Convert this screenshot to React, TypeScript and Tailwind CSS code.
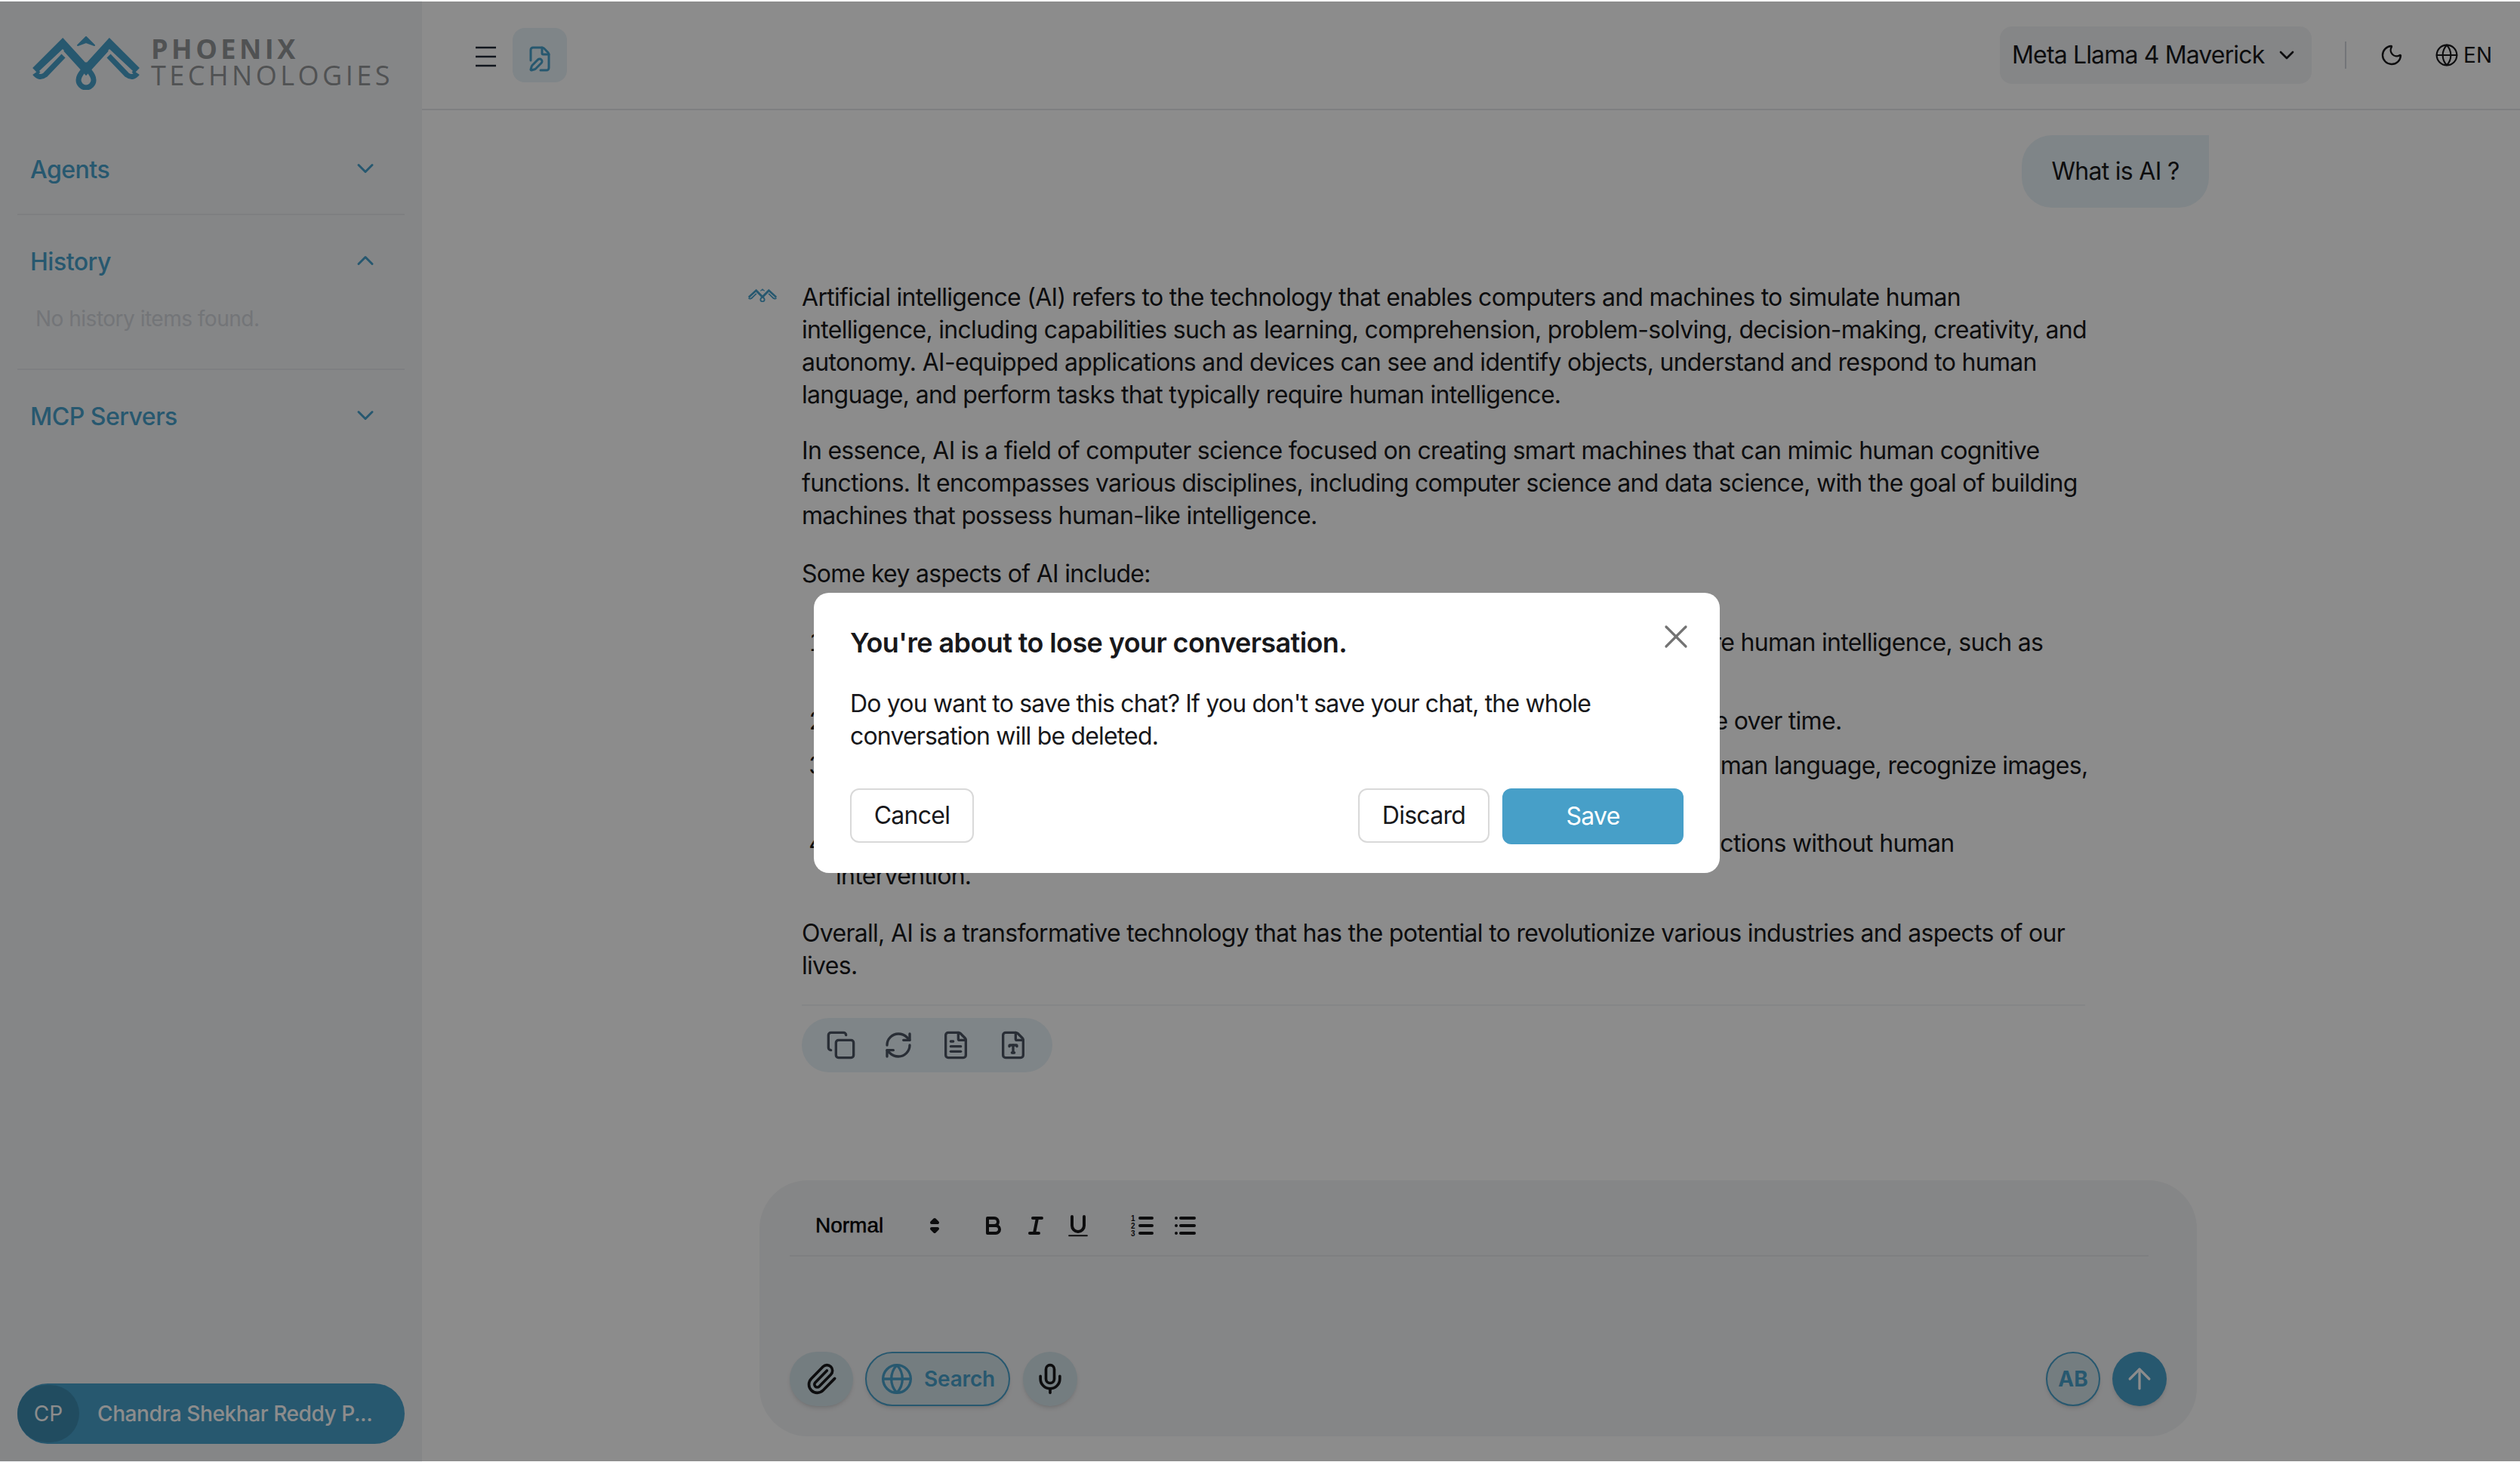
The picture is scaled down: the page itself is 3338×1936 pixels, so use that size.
import React from 'react';
import {
  ArrowUp,
  ChevronDown,
  ChevronUp,
  Copy,
  FilePen,
  FileText,
  FileType,
  Globe,
  Mic,
  Moon,
  Paperclip,
  RefreshCw,
  X,
} from 'lucide-react';

const Logo: React.FC<{ className: string; slit: string }> = ({ className, slit }) => (
  <svg viewBox="0 0 148 72" preserveAspectRatio="none" className={className} fill="none">
    <path d="M7 47 L43 11 L74 45 L105 11 L141 47" stroke="#47a0cb" strokeWidth="11" />
    <path d="M6 50 Q12 58 20 52 L44 27 M142 50 Q136 58 128 52 L104 27" stroke="#47a0cb" strokeWidth="7" />
    <path d="M13 48 L44 19 M135 48 L104 19" stroke={slit} strokeWidth="3" />
    <path d="M74 2 L85 13 L74 9 L63 13 Z" fill="#47a0cb" stroke="#47a0cb" strokeWidth="2" strokeLinejoin="round" />
    <path d="M74 41 C80 50 84 53 84 59 A10 10 0 0 1 64 59 C64 53 68 50 74 41 Z" stroke="#47a0cb" strokeWidth="7" />
  </svg>
);

const SideSection: React.FC<{ title: string; open?: boolean; last?: boolean; children?: React.ReactNode }> = ({ title, open, last, children }) => (
  <div className={last ? 'mx-[23px]' : 'mx-[23px] border-b-2 border-gray-200'}>
    <div className="flex h-[120px] items-center justify-between pl-[17px] pr-[34px] pt-[3px]">
      <span className="text-[32px] font-medium tracking-[-0.5px] text-[#47a0cb]">{title}</span>
      {open ? <ChevronUp size={36} className="mb-[4px] text-[#47a0cb]" /> : <ChevronDown size={36} className="mb-[4px] text-[#47a0cb]" />}
    </div>
    {children}
  </div>
);

const Sidebar = () => (
  <aside className="flex w-[559px] shrink-0 flex-col bg-[#f3f4f6]">
    <div className="flex h-[163px] items-start gap-[12px] pl-[40px] pt-[47px]">
      <Logo className="h-[72px] w-[148px]" slit="#f3f4f6" />
      <div className="font-['Open_Sans'] text-[36px] leading-[36px] text-[#939598]">
        <div className="font-bold tracking-[4.5px]">PHOENIX</div>
        <div className="-mt-[1px] tracking-[4.5px]">TECHNOLOGIES</div>
      </div>
    </div>
    <SideSection title="Agents" />
    <SideSection title="History" open>
      <p className="h-[83px] pl-[24px] pt-[3px] text-[28px] leading-[28px] tracking-[-0.5px] text-[#d1d5db]">No history items found.</p>
    </SideSection>
    <SideSection title="MCP Servers" last />
    <div className="mx-[23px] mb-[24px] mt-auto flex h-[80px] items-center rounded-full bg-[#47a0cb]">
      <div className="flex h-[76px] w-[82px] items-center justify-center rounded-full bg-[#3d8bb0] text-[28px] text-white">CP</div>
      <span className="ml-[24px] whitespace-nowrap text-[28px] font-medium tracking-[-0.4px] text-white">Chandra Shekhar Reddy P...</span>
    </div>
  </aside>
);

const Header = () => (
  <header className="flex h-[146px] shrink-0 items-center border-b-2 border-gray-200 pl-[71px] pr-[37px] pt-[2px]">
    <svg width="27" height="28" viewBox="0 0 27 28" stroke="#1f2937" strokeWidth="2.6" className="mt-[4px]">
      <path d="M0 2H27M0 14H27M0 26H27" />
    </svg>
    <div className="ml-[22px] flex h-[72px] w-[72px] items-center justify-center rounded-[16px] bg-[#e8f2f7] pt-[10px]">
      <FilePen size={36} className="text-[#47a0cb]" />
    </div>
    <div className="ml-auto flex h-[76px] w-[413px] items-center rounded-[16px] bg-[#f3f4f6] pl-[16px]">
      <span className="whitespace-nowrap text-[32px] tracking-[-0.85px] text-[#18181b]">Meta Llama 4 Maverick</span>
      <ChevronDown size={32} className="ml-[14px] text-[#18181b]" />
    </div>
    <div className="ml-[44px] h-[36px] w-[2px] bg-gray-300" />
    <Moon size={32} strokeWidth={1.8} className="ml-[44px] text-[#18181b]" />
    <Globe size={32} strokeWidth={1.6} className="ml-[41px] text-[#18181b]" />
    <span className="ml-[6px] text-[28px] text-[#18181b]">EN</span>
  </header>
);

const Conversation = () => (
  <div className="flex-1 overflow-hidden">
    <div className="ml-[2119px] mt-[33px] flex h-[96px] w-[248px] items-center justify-center rounded-[40px] rounded-tr-none bg-[#e8f2f7] text-[32px] tracking-[-0.7px] text-[#18181b]">
      What is AI ?
    </div>
    <div className="mt-[97px] flex">
      <Logo className="ml-[431px] mt-[10px] h-[18px] w-[40px]" slit="#ffffff" />
      <div className="ml-[32px] w-[1710px] text-[32px] leading-[43px] tracking-[-0.7px] text-[#18181b]">
        <p>
          Artificial intelligence (AI) refers to the technology that enables computers and machines to simulate human
          intelligence, including capabilities such as learning, comprehension, problem-solving, decision-making,
          creativity, and autonomy. AI-equipped applications and devices can see and identify objects, understand and
          respond to human language, and perform tasks that typically require human intelligence.
        </p>
        <p className="mt-[31px]">
          In essence, AI is a field of computer science focused on creating smart machines that can mimic human cognitive
          functions. It encompasses various disciplines, including computer science and data science, with the goal of
          building machines that possess human-like intelligence.
        </p>
        <p className="mt-[34px]">Some key aspects of AI include:</p>
        <ol className="mt-[48px] list-decimal whitespace-nowrap pl-[45px]">
          <li>
            Intelligent Systems: AI enables machines to perform core tasks that usually require human intelligence, such as
            <br />
            problem-solving and decision-making.
          </li>
          <li className="mt-[18px]">Machine Learning: AI systems can learn from data and improve their performance over time.</li>
          <li className="mt-[16px]">
            Natural Language Processing: AI systems can understand, parse and produce human language, recognize images,
            <br />
            and make decisions.
          </li>
          <li className="mt-[17px]">
            Autonomy: AI-equipped systems can operate independently and perform many actions without human
            <br />
            intervention.
          </li>
        </ol>
        <p className="mt-[33px]">
          Overall, AI is a transformative technology that has the potential to revolutionize various industries and aspects
          of our lives.
        </p>
        <div className="mt-[30px] h-[2px] w-[1700px] bg-gray-100" />
        <div className="mt-[16px] flex h-[72px] w-[332px] items-center gap-[36px] rounded-full bg-[#e8f2f7] pl-[32px] text-[#4b5563]">
          <Copy size={40} />
          <RefreshCw size={40} />
          <FileText size={40} />
          <FileType size={40} />
        </div>
      </div>
    </div>
  </div>
);

// quill toolbar glyphs, 18 unit box drawn at 2x
const ToolIcon: React.FC<{ children: React.ReactNode }> = ({ children }) => (
  <button className="flex h-[48px] w-[56px] items-center justify-center">
    <svg width="36" height="36" viewBox="0 0 18 18" fill="none" stroke="#18181b" strokeWidth="2" strokeLinecap="round" strokeLinejoin="round">
      {children}
    </svg>
  </button>
);

const Composer = () => (
  <div className="mb-[34px] ml-[447px] flex h-[339px] w-[1904px] shrink-0 flex-col rounded-[64px] bg-[#f3f4f6] px-[40px]">
    <div className="mr-[24px] flex h-[101px] shrink-0 items-center border-b-2 border-gray-200 pl-[18px] pt-[20px]">
      <div className="flex w-[196px] items-center justify-between pl-[16px] pr-[4px] font-['Liberation_Sans'] text-[28px] text-black [-webkit-text-stroke:0.5px_black]">
        Normal
        <svg width="36" height="36" viewBox="0 0 18 18" fill="#18181b">
          <polygon points="7 11 9 13 11 11" stroke="#18181b" strokeWidth="2" strokeLinejoin="round" />
          <polygon points="7 7 9 5 11 7" stroke="#18181b" strokeWidth="2" strokeLinejoin="round" />
        </svg>
      </div>
      <div className="ml-[28px] flex">
        <ToolIcon>
          <path d="M5,4H9.5A2.5,2.5,0,0,1,12,6.5v0A2.5,2.5,0,0,1,9.5,9H5V4Z" />
          <path d="M5,9h5.5A2.5,2.5,0,0,1,13,11.5v0A2.5,2.5,0,0,1,10.5,14H5V9Z" />
        </ToolIcon>
        <ToolIcon>
          <path d="M7 4H13M5 14H11M8 14L10 4" />
        </ToolIcon>
        <ToolIcon>
          <path d="M5,3V9a4,4,0,0,0,4,4h0a4,4,0,0,0,4-4V3" />
          <rect x="3" y="15.5" width="12" height="0.2" strokeWidth="0.8" />
        </ToolIcon>
      </div>
      <div className="ml-[30px] flex">
        <ToolIcon>
          <path d="M7 4H15M7 9H15M7 14H15" />
          <text x="2.4" y="6" fontSize="5" fontWeight="700" fill="#18181b" stroke="none" textAnchor="middle" fontFamily="Liberation Sans, sans-serif">1</text>
          <text x="2.4" y="11" fontSize="5" fontWeight="700" fill="#18181b" stroke="none" textAnchor="middle" fontFamily="Liberation Sans, sans-serif">2</text>
          <text x="2.4" y="16" fontSize="5" fontWeight="700" fill="#18181b" stroke="none" textAnchor="middle" fontFamily="Liberation Sans, sans-serif">3</text>
        </ToolIcon>
        <ToolIcon>
          <path d="M6 4H15M6 9H15M6 14H15M3 4H3M3 9H3M3 14H3" />
        </ToolIcon>
      </div>
    </div>
    <div className="mb-[40px] mt-auto flex items-center">
      <button className="flex h-[72px] w-[84px] items-center justify-center rounded-full bg-[#d4e4ea] text-[#18181b] shadow-md">
        <Paperclip size={44} />
      </button>
      <button className="ml-[16px] flex h-[72px] w-[192px] items-center justify-center gap-[14px] rounded-full border-2 border-[#47a0cb] bg-[#d4e4ea] text-[28px] font-semibold tracking-[-0.2px] text-[#47a0cb] shadow-md">
        <Globe size={44} strokeWidth={1.8} />
        Search
      </button>
      <button className="ml-[17px] flex h-[72px] w-[72px] items-center justify-center rounded-full bg-[#d4e4ea] text-[#18181b] shadow-md">
        <Mic size={44} />
      </button>
      <button className="ml-auto flex h-[72px] w-[72px] items-center justify-center rounded-full border-2 border-[#47a0cb] bg-[#d4e4ea] text-[28px] font-bold text-[#47a0cb] shadow-md">
        AB
      </button>
      <button className="ml-[16px] flex h-[72px] w-[72px] items-center justify-center rounded-full bg-[#47a0cb] text-white shadow-md">
        <ArrowUp size={44} strokeWidth={1.8} />
      </button>
    </div>
  </div>
);

const SaveDialog = () => (
  <div className="fixed bottom-[1px] left-0 right-0 top-[2px] flex items-center justify-center bg-black/45 pl-[18px] pt-[3px]">
    <div className="relative w-[1200px] rounded-[20px] bg-white px-[48px] pb-[38px] pt-[44px] text-[#18181b]">
      <button className="absolute right-[32px] top-[32px] text-[#737373]">
        <X size={52} strokeWidth={1.5} />
      </button>
      <h2 className="text-[36px] font-semibold leading-[44px] tracking-[-0.6px]">You're about to lose your conversation.</h2>
      <p className="mt-[37px] text-[32px] leading-[43px] tracking-[-0.83px]">
        Do you want to save this chat? If you don't save your chat, the whole
        <br />
        conversation will be deleted.
      </p>
      <div className="mt-[48px] flex items-start text-[32px] tracking-[-0.7px]">
        <button className="h-[72px] w-[164px] rounded-[12px] border-2 border-[#d9d9d9]">Cancel</button>
        <button className="ml-auto h-[72px] w-[174px] rounded-[12px] border-2 border-[#d9d9d9]">Discard</button>
        <button className="ml-[17px] h-[74px] w-[240px] rounded-[12px] bg-[#479fc8] text-white">Save</button>
      </div>
    </div>
  </div>
);

export default function App() {
  return (
    <div className="flex h-[1936px] w-[3338px] overflow-hidden bg-white font-['Inter',sans-serif]">
      <Sidebar />
      <main className="flex min-w-0 flex-1 flex-col">
        <Header />
        <Conversation />
        <Composer />
      </main>
      <SaveDialog />
    </div>
  );
}
